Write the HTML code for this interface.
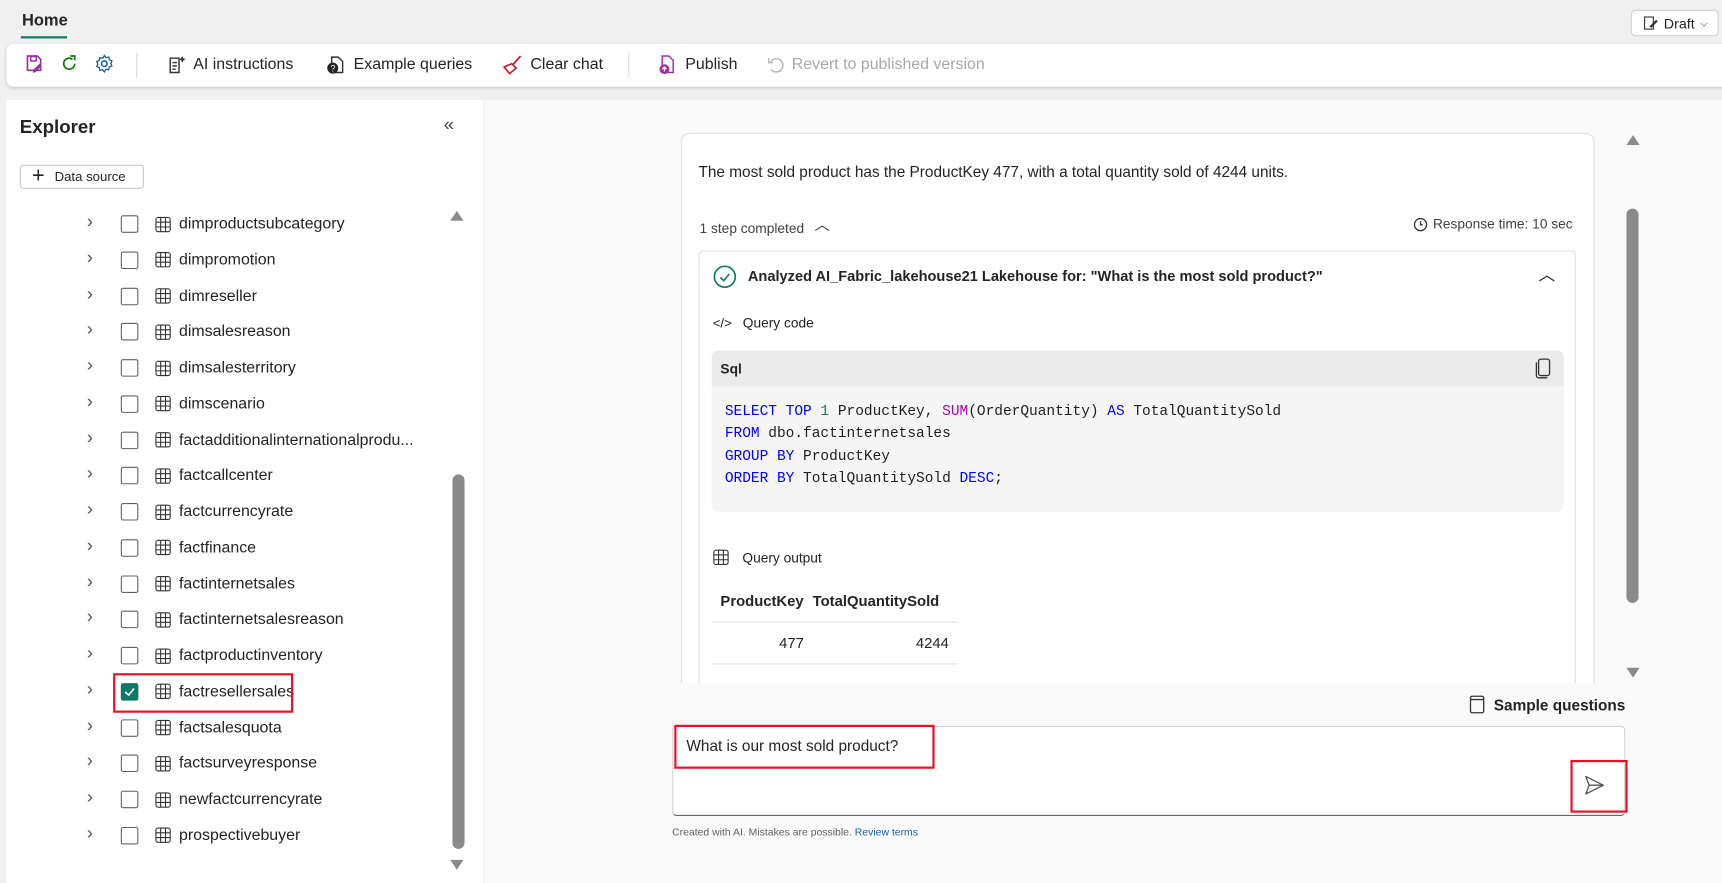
<!DOCTYPE html>
<html><head><meta charset="utf-8"><style>
*{box-sizing:border-box;margin:0;padding:0}
html,body{width:1722px;height:883px;overflow:hidden;background:#f0f0f0;font-family:"Liberation Sans",sans-serif;color:#242424}
#s{position:absolute;left:0;top:0;width:1568px;height:804px;transform:scale(1.09821);transform-origin:0 0;background:#f0f0f0}
.a{position:absolute}
.tb{display:flex;align-items:center;gap:6px;font-size:14.5px;color:#242424;white-space:nowrap}
.row{position:absolute;left:0;height:32px;display:flex;align-items:center;font-size:14.5px}
.cb{position:absolute;left:110px;width:16px;height:16px;border:1px solid #616161;border-radius:2px;background:#fff}
.mono{font-family:"Liberation Mono",monospace;font-size:13.2px;color:#1f1f1f}
.k{color:#0000ff}.f{color:#b000b0}.n{color:#098658}
</style></head><body><div id="s">
<div class="a" style="left:20px;top:10px;font-size:15px;font-weight:bold;color:#242424">Home</div>
<div class="a" style="left:19px;top:33px;width:42px;height:2px;background:#117865"></div>
<div class="a" style="left:1485px;top:9px;width:80px;height:24px;background:#fff;border:1px solid #d1d1d1;border-radius:4px;font-size:13px;display:flex;align-items:center;padding-left:10px;gap:5px">
<svg width="14" height="14" viewBox="0 0 14 14"><rect x="1.5" y="1.5" width="8" height="11" fill="none" stroke="#333"/><path d="M6 10l6-6 1.5 1.5-6 6z" fill="#333"/></svg>Draft <span style="font-size:9px">⌵</span></div>
<div class="a" style="left:6px;top:40px;width:1570px;height:39px;background:#fff;border-radius:6px;box-shadow:0 1px 3px rgba(0,0,0,.18)"></div>
<div class="a tb" style="left:22px;top:49px;gap:14px">
<svg width="18" height="18" viewBox="0 0 18 18"><path d="M3 2h9l3 3v10H3z" fill="none" stroke="#9c2ea3" stroke-width="1.5"/><rect x="6" y="2.5" width="5" height="4" fill="none" stroke="#9c2ea3" stroke-width="1.3"/><path d="M8 15l6-6 2 2-6 6H8z" fill="#9c2ea3"/></svg>
<svg width="18" height="18" viewBox="0 0 18 18"><path d="M14 9a5 5 0 1 1-2-4" fill="none" stroke="#107c10" stroke-width="1.6"/><path d="M10 2h4v4" fill="none" stroke="#107c10" stroke-width="1.6"/></svg>
<svg width="18" height="18" viewBox="0 0 18 18"><circle cx="9" cy="9" r="2.5" fill="none" stroke="#115ea3" stroke-width="1.4"/><path d="M9 1.5l1.5 2 2.5-.5.6 2.4 2.3 1.1-1 2.2 1 2.3-2.3 1-.6 2.5-2.5-.5L9 16.5l-1.5-2-2.5.5-.6-2.4L2.1 11.5l1-2.3-1-2.2 2.3-1.1.6-2.4 2.5.5z" fill="none" stroke="#115ea3" stroke-width="1.2"/></svg>
</div>
<div class="a" style="left:124px;top:48px;width:1px;height:22px;background:#d6d6d6"></div>
<div class="a tb" style="left:152px;top:50px"><svg width="18" height="18" viewBox="0 0 18 18"><path d="M3 3h8v13H3z M5 7h4M5 10h4M5 13h3" fill="none" stroke="#333" stroke-width="1.3"/><path d="M14 1l1 2 2 1-2 1-1 2-1-2-2-1 2-1z" fill="#333"/></svg>AI instructions</div>
<div class="a tb" style="left:296px;top:50px"><svg width="20" height="18" viewBox="0 0 20 18"><path d="M6 2h6l4 4v10H6z" fill="none" stroke="#333" stroke-width="1.3"/><circle cx="7" cy="12" r="5" fill="#242424"/><text x="5" y="15" font-size="8" fill="#fff" font-family="Liberation Sans">?</text></svg>Example queries</div>
<div class="a tb" style="left:457px;top:50px"><svg width="20" height="18" viewBox="0 0 20 18"><path d="M17 1l-7 8" stroke="#c50f1f" stroke-width="1.5"/><path d="M9 8l4 4-6 5-5-6z" fill="none" stroke="#c50f1f" stroke-width="1.4"/></svg>Clear chat</div>
<div class="a" style="left:572px;top:48px;width:1px;height:22px;background:#d6d6d6"></div>
<div class="a tb" style="left:598px;top:50px"><svg width="20" height="18" viewBox="0 0 20 18"><path d="M5 1h6l4 4v11H5z" fill="none" stroke="#9c2ea3" stroke-width="1.3"/><circle cx="7" cy="13" r="4.5" fill="#9c2ea3"/><path d="M7 15v-4M5 13l2-2 2 2" stroke="#fff" stroke-width="1.2" fill="none"/></svg>Publish</div>
<div class="a tb" style="left:697px;top:50px;color:#a8a8a8"><svg width="18" height="18" viewBox="0 0 18 18"><path d="M5 6a6 6 0 1 1 0 7" fill="none" stroke="#b8b8b8" stroke-width="1.4"/><path d="M3 3v4h4" fill="none" stroke="#b8b8b8" stroke-width="1.4"/></svg>Revert to published version</div>
<div class="a" style="left:6px;top:91px;width:434px;height:713px;background:#fff"></div>
<div class="a" style="left:441px;top:91px;width:1127px;height:713px;background:#fafafa"></div>
<div class="a" style="left:18px;top:106px;font-size:17px;font-weight:bold">Explorer</div>
<div class="a" style="left:404px;top:104px;font-size:17px;color:#444">«</div>
<div class="a" style="left:18px;top:150px;width:113px;height:22px;border:1px solid #c7c7c7;border-radius:3px;font-size:12px;display:flex;align-items:center;padding-left:10px;gap:9px;background:#fff"><span style="font-size:20px;font-weight:300;line-height:1;margin-top:-2px">+</span>Data source</div>
<div id="tree"></div>
<div class="a" style="left:410px;top:192px;width:0;height:0;border-left:6px solid transparent;border-right:6px solid transparent;border-bottom:9px solid #8a8a8a"></div>
<div class="a" style="left:412px;top:432px;width:11px;height:341px;border-radius:6px;background:#8a8a8a"></div>
<div class="a" style="left:410px;top:783px;width:0;height:0;border-left:6px solid transparent;border-right:6px solid transparent;border-top:9px solid #8a8a8a"></div>
<div class="a" style="left:103px;top:613px;width:164px;height:36px;border:2px solid #e81123"></div>
<div class="a" style="left:620px;top:121px;width:832px;height:520px;background:#fff;border:1px solid #e0e0e0;border-radius:8px;overflow:hidden">
<div class="a" style="left:15px;top:26px;font-size:14px">The most sold product has the ProductKey 477, with a total quantity sold of 4244 units.</div>
<div class="a" style="left:16px;top:75px;font-size:12.5px;color:#424242">1 step completed <span style="font-size:14px;margin-left:6px;position:relative;top:-3px">︿</span></div>
<div class="a" style="right:19px;top:75px;font-size:12.5px;color:#424242;display:flex;align-items:center;gap:5px"><svg width="13" height="13" viewBox="0 0 13 13"><circle cx="6.5" cy="6.5" r="5.5" fill="none" stroke="#333" stroke-width="1.2"/><path d="M6.5 3.5v3.2h2" fill="none" stroke="#333" stroke-width="1.2"/></svg>Response time: 10 sec</div>
<div class="a" style="left:15px;top:106px;width:799px;height:420px;border:1px solid #e0e0e0;border-radius:4px">
<svg class="a" style="left:12px;top:12px" width="22" height="22" viewBox="0 0 22 22"><circle cx="11" cy="11" r="9.5" fill="none" stroke="#117865" stroke-width="1.5"/><path d="M7 11.5l3 3 5-6" fill="none" stroke="#117865" stroke-width="1.5"/></svg>
<div class="a" style="left:44px;top:15px;font-size:13.3px;font-weight:bold;color:#242424">Analyzed AI_Fabric_lakehouse21 Lakehouse for: "What is the most sold product?"</div>
<div class="a" style="right:18px;top:10px;font-size:15px">︿</div>
<div class="a" style="left:12px;top:58px;font-size:12.5px;display:flex;gap:10px"><span style="font-size:12px">&lt;/&gt;</span>Query code</div>
<div class="a" style="left:11px;top:90px;width:776px;height:147px;background:#f5f5f5;border-radius:6px;overflow:hidden">
<div style="height:33px;background:#ebebeb;font-size:12.5px;font-weight:bold;padding:10px 8px">Sql</div>
<svg class="a" style="right:12px;top:7px" width="14" height="19" viewBox="0 0 14 19"><rect x="3" y="1" width="10" height="15" rx="2" fill="none" stroke="#333" stroke-width="1.2"/><path d="M1 4v12a2 2 0 0 0 2 2h8" fill="none" stroke="#333" stroke-width="1.2"/></svg>
<div class="mono" style="position:absolute;left:12px;top:46px;line-height:20.3px;white-space:pre"><span class="k">SELECT TOP</span> <span class="n">1</span> ProductKey, <span class="f">SUM</span>(OrderQuantity) <span class="k">AS</span> TotalQuantitySold
<span class="k">FROM</span> dbo.factinternetsales
<span class="k">GROUP BY</span> ProductKey
<span class="k">ORDER BY</span> TotalQuantitySold <span class="k">DESC</span>;</div>
</div>
<div class="a" style="left:12px;top:271px;font-size:12.5px;display:flex;gap:12px;align-items:center"><svg width="15" height="15" viewBox="0 0 15 15"><rect x="1" y="1" width="13" height="13" rx="2" fill="none" stroke="#333"/><path d="M1 5.3h13M1 9.7h13M5.3 1v13M9.7 1v13" stroke="#333"/></svg>Query output</div>
<div class="a" style="left:11px;top:300px;width:224px;font-size:13.5px">
<div style="height:38px;display:flex;align-items:center;font-weight:bold;border-bottom:1px solid #e0e0e0"><span style="width:92px;padding-left:8px">ProductKey</span><span>TotalQuantitySold</span></div>
<div style="height:38px;display:flex;align-items:center;border-bottom:1px solid #e0e0e0"><span style="width:84px;text-align:right">477</span><span style="width:132px;text-align:right">4244</span></div>
</div>
</div>
</div>
<div class="a" style="left:620px;top:622px;width:832px;height:30px;background:#fafafa"></div>
<div class="a" style="left:1481px;top:123px;width:0;height:0;border-left:6px solid transparent;border-right:6px solid transparent;border-bottom:9px solid #8a8a8a"></div>
<div class="a" style="left:1481px;top:190px;width:11px;height:359px;border-radius:6px;background:#8a8a8a"></div>
<div class="a" style="left:1481px;top:608px;width:0;height:0;border-left:6px solid transparent;border-right:6px solid transparent;border-top:9px solid #8a8a8a"></div>
<div class="a" style="right:88px;top:633px;font-size:14px;font-weight:bold;display:flex;align-items:center;gap:8px;color:#242424"><svg width="14" height="17" viewBox="0 0 14 17"><rect x="1" y="1" width="12" height="15" rx="1.5" fill="none" stroke="#333" stroke-width="1.2"/><path d="M1 4h12" stroke="#333" stroke-width="1.2"/></svg>Sample questions</div>
<div class="a" style="left:612px;top:661px;width:868px;height:82px;background:#fff;border:1px solid #d1d1d1;border-bottom:1px solid #616161;border-radius:4px"></div>
<div class="a" style="left:614px;top:660px;width:237px;height:40px;border:2px solid #e81123"></div>
<div class="a" style="left:625px;top:671px;font-size:14px">What is our most sold product?</div>
<div class="a" style="left:1430px;top:692px;width:52px;height:48px;border:2px solid #e81123"></div>
<svg class="a" style="left:1442px;top:705px" width="20" height="20" viewBox="0 0 20 20"><path d="M2 2l16 8-16 8 3-8z M5 10h13" fill="none" stroke="#555" stroke-width="1.2" stroke-linejoin="round"/></svg>
<div class="a" style="left:612px;top:753px;font-size:9.5px;color:#616161">Created with AI. Mistakes are possible. <span style="color:#115ea3">Review terms</span></div>
</div>
<script>
var names=["dimproductsubcategory","dimpromotion","dimreseller","dimsalesreason","dimsalesterritory","dimscenario","factadditionalinternationalprodu...","factcallcenter","factcurrencyrate","factfinance","factinternetsales","factinternetsalesreason","factproductinventory","factresellersales","factsalesquota","factsurveyresponse","newfactcurrencyrate","prospectivebuyer"];
var h="";names.forEach(function(n,i){var y=188+i*32.75;var c=i==13;
h+='<div class="row" style="top:'+y+'px;width:400px"><span style="position:absolute;left:79px;font-size:17px;color:#555;top:4px">›</span>'+
'<span class="cb" style="'+(c?'background:#117865;border-color:#117865':'')+'">'+(c?'<svg width="14" height="14" viewBox="0 0 14 14"><path d="M3 7l3 3 5-6" fill="none" stroke="#fff" stroke-width="1.5"/></svg>':'')+'</span>'+
'<svg style="position:absolute;left:141px" width="15" height="15" viewBox="0 0 15 15"><rect x="1" y="1" width="13" height="13" rx="2" fill="none" stroke="#333"/><path d="M1 5.3h13M1 9.7h13M5.3 1v13M9.7 1v13" stroke="#333"/></svg>'+
'<span style="position:absolute;left:163px">'+n+'</span></div>';});
document.getElementById("tree").innerHTML=h;
</script>
</body></html>
